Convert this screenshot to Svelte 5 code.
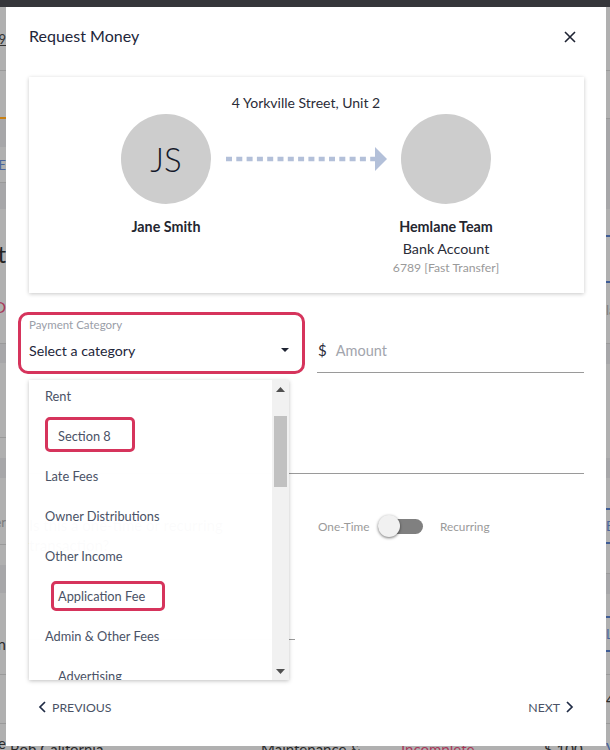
<script lang="ts">
  // strips of the page behind the dialog, top to bottom
  const leftStrip = [
    { h: 64, cls: 'line', text: '19', kind: 'link' },
    { h: 48, cls: 'tab' },
    { h: 28, cls: 'band' },
    { h: 36, cls: 'line', text: 'VIE', kind: 'blue' },
    { h: 26, cls: 'band' },
    { h: 88, text: 'Select', kind: 'big' },
    { h: 18, text: 'O', kind: 'red' },
    { h: 29, cls: 'line' },
    { h: 19, cls: 'band' },
    { h: 75, cls: 'line' },
    { h: 20 },
    { h: 20, cls: 'band' },
    { h: 21 },
    { h: 46, cls: 'line', text: 'Other', kind: 'grey' },
    { h: 20 },
    { h: 28, cls: 'band' },
    { h: 20 },
    { h: 62, cls: 'line', text: 'Main', kind: 'dark' },
    { h: 49, cls: 'line' },
    { h: 26, text: 'e', kind: 'tail' }
  ];

  const rightStrip = [
    { h: 64, cls: 'line' },
    { h: 48, cls: 'line' },
    { h: 90, cls: 'band' },
    { h: 26 },
    { h: 48, cls: 'btn' },
    { h: 12 },
    { h: 30, text: 'la', kind: 'grey' },
    { h: 19, cls: 'line' },
    { h: 20, cls: 'band' },
    { h: 94 },
    { h: 20, cls: 'band' },
    { h: 30 },
    { h: 36, cls: 'btn', text: 'E', kind: 'blue' },
    { h: 30, cls: 'line' },
    { h: 20, cls: 'band' },
    { h: 22 },
    { h: 36, cls: 'btn', text: 'L', kind: 'blue' },
    { h: 23, cls: 'line' },
    { h: 49, cls: 'line', text: '4', kind: 'dark' },
    { h: 26, text: 'V', kind: 'tailblue' }
  ];

  const categories = [
    { label: 'Rent' },
    { label: 'Section 8', sub: true, mark: 'wide' },
    { label: 'Late Fees' },
    { label: 'Owner Distributions' },
    { label: 'Other Income' },
    { label: 'Application Fee', sub: true, mark: 'slim' },
    { label: 'Admin & Other Fees' },
    { label: 'Advertising', sub: true }
  ];
</script>

<div class="page">
  <div class="topbar"></div>
  <div class="stage">
    <div class="strip strip--left">
      {#each leftStrip as seg}
        <div class="seg {seg.cls ?? ''}" style="height: {seg.h}px">
          {#if seg.text}<span class="bit bit--{seg.kind}">{seg.text}</span>{/if}
        </div>
      {/each}
    </div>

    <div class="center">
      <div class="modal">
        <header class="modal__head">
          <h2>Request Money</h2>
          <svg class="close" width="12" height="12" viewBox="0 0 12 12" aria-hidden="true">
            <path d="M1 1l10 10M11 1L1 11" stroke="#1f2433" stroke-width="1.6" fill="none" />
          </svg>
        </header>

        <section class="card">
          <p class="address">4 Yorkville Street, Unit 2</p>
          <div class="flow">
            <div class="person">
              <div class="avatar">JS</div>
              <strong>Jane Smith</strong>
            </div>
            <svg class="arrow" width="161" height="24" viewBox="0 0 161 24" aria-hidden="true">
              <line x1="0" y1="12" x2="150" y2="12" stroke="#b3c0d9" stroke-width="4.5" stroke-dasharray="6 4.3" />
              <path d="M149 0l12 12-12 12z" fill="#b3c0d9" />
            </svg>
            <div class="person">
              <div class="avatar"></div>
              <strong>Hemlane Team</strong>
              <span class="account">Bank Account</span>
              <span class="digits">6789 [Fast Transfer]</span>
            </div>
          </div>
        </section>

        <div class="form">
          <div class="row">
            <div class="select">
              <span class="select__label">Payment Category</span>
              <span class="select__value">Select a category</span>
              <svg class="select__caret" width="8" height="4" viewBox="0 0 8 4" aria-hidden="true">
                <path d="M0 0h8L4 4z" fill="#1f2433" />
              </svg>
            </div>
            <div class="amount">
              <span class="amount__sign">$</span>
              <span class="amount__text">Amount</span>
            </div>
          </div>

          <div class="memo"></div>

          <div class="kind">
            <p class="kind__question">Is this a one-time or recurring transaction?</p>
            <div class="kind__toggle">
              <span class="kind__one">One-Time</span>
              <div class="switch"><div class="switch__knob"></div></div>
              <span>Recurring</span>
            </div>
          </div>

          <div class="date"></div>

          <div class="menu">
            <ul class="menu__list">
              {#each categories as item}
                <li class="item" class:item--sub={item.sub && !item.mark}>
                  {#if item.mark}
                    <span class="mark mark--{item.mark}">{item.label}</span>
                  {:else}
                    {item.label}
                  {/if}
                </li>
              {/each}
            </ul>
            <div class="scroll">
              <svg width="9" height="5" viewBox="0 0 9 5" aria-hidden="true"><path d="M0 5h9L4.5 0z" fill="#505050" /></svg>
              <div class="scroll__track"><div class="scroll__thumb"></div></div>
              <svg width="9" height="5" viewBox="0 0 9 5" aria-hidden="true"><path d="M0 0h9L4.5 5z" fill="#505050" /></svg>
            </div>
          </div>
        </div>

        <footer class="modal__foot">
          <span class="nav">
            <svg width="8" height="12" viewBox="0 0 8 12" aria-hidden="true"><path d="M7 1L2 6l5 5" stroke="#1f2b45" stroke-width="1.7" fill="none" /></svg>
            PREVIOUS
          </span>
          <span class="nav">
            NEXT
            <svg width="8" height="12" viewBox="0 0 8 12" aria-hidden="true"><path d="M1 1l5 5-5 5" stroke="#1f2b45" stroke-width="1.7" fill="none" /></svg>
          </span>
        </footer>
      </div>

      <div class="behind">
        <span>Bob California</span>
        <span>Maintenance &amp;</span>
        <span class="behind__red">Incomplete</span>
        <span>$ 100</span>
      </div>
    </div>

    <div class="strip strip--right">
      {#each rightStrip as seg}
        <div class="seg {seg.cls ?? ''}" style="height: {seg.h}px">
          {#if seg.text}<span class="bit bit--{seg.kind}">{seg.text}</span>{/if}
        </div>
      {/each}
    </div>
  </div>
</div>

<style>
  :global(body) {
    background: #b0b0b0;
  }

  .page {
    width: 610px;
    height: 750px;
    overflow: hidden;
    font-family: 'Lato', 'Noto Sans', sans-serif;
    color: #2a2c38;
  }

  .topbar {
    height: 7px;
    background: #35363a;
  }

  .stage {
    display: grid;
    grid-template-columns: 6px 600px 4px;
  }

  /* page behind the dialog */
  .strip {
    display: flex;
    flex-direction: column;
    overflow: hidden;
  }

  .seg {
    box-sizing: border-box;
    display: flex;
    align-items: center;
    flex: none;
    overflow: hidden;
    white-space: nowrap;
  }

  .strip--left .seg { justify-content: flex-end; }

  .line { border-bottom: 1px solid #9a9a9a; }
  .band { background: #a7a7a9; }
  .tab { border-bottom: 2px solid #c77f14; }
  .btn {
    border-top: 2px solid #3f5c94;
    border-bottom: 2px solid #3f5c94;
  }

  .bit { font-size: 13px; }
  .bit--link { color: #333; text-decoration: underline; }
  .bit--blue { color: #4a659c; }
  .bit--big { color: #222; font-size: 24px; }
  .bit--red { color: #a8395a; font-size: 16px; }
  .bit--grey { color: #7c7c7c; }
  .bit--dark { color: #2a2a2a; font-size: 15px; }
  .bit--tail { color: #2a2a2a; font-size: 15px; margin-top: 12px; }
  .bit--tailblue { color: #4a659c; font-size: 15px; margin-top: 22px; }

  .center {
    height: 743px;
    overflow: hidden;
  }

  .behind {
    display: grid;
    grid-template-columns: 255px 140px 143px 1fr;
    height: 14px;
    margin-top: -4px;
    font-size: 15px;
    line-height: 14px;
    color: #2a2a2a;
  }

  .behind span:first-child { padding-left: 4px; }
  .behind__red { color: #a8395a; }

  /* dialog */
  .modal {
    box-sizing: border-box;
    position: relative;
    z-index: 1;
    display: flex;
    flex-direction: column;
    height: 739px;
    background: #fff;
    padding: 0 22px 0 23px;
  }

  .modal__head {
    display: flex;
    align-items: center;
    justify-content: space-between;
    flex: none;
    height: 57px;
    margin-bottom: 13px;
    padding-right: 8px;
  }

  .modal__head h2 {
    margin: 0;
    font-size: 16px;
    font-weight: 400;
    color: #22263a;
  }

  .close { margin-top: 3px; }

  .card {
    box-sizing: border-box;
    flex: none;
    height: 216px;
    padding: 16px 93px 0 92px;
    background: #fff;
    box-shadow: 0 1px 4px rgba(0, 0, 0, 0.22);
  }

  .address {
    margin: 0 0 1px;
    line-height: 20px;
    font-size: 14px;
    text-align: center;
    color: #2a2c38;
  }

  .flow {
    display: grid;
    grid-template-columns: 90px 1fr 90px;
    column-gap: 14px;
  }

  .person {
    display: flex;
    flex-direction: column;
    align-items: center;
    white-space: nowrap;
  }

  .person strong {
    margin-top: 13px;
    font-size: 14.3px;
    line-height: 20px;
    font-weight: 700;
    color: #24262f;
  }

  .avatar {
    display: flex;
    align-items: center;
    justify-content: center;
    flex: none;
    width: 90px;
    height: 90px;
    border-radius: 50%;
    background: #cdcdcd;
    font-size: 33px;
    font-weight: 300;
    color: #15192a;
  }

  .arrow {
    margin: 33px 0 0 1px;
  }

  .account {
    margin-top: 2px;
    font-size: 14.3px;
    line-height: 20px;
  }

  .digits {
    font-size: 12.2px;
    line-height: 18px;
    color: #9a9a9a;
  }

  /* form */
  .form {
    position: relative;
    flex: none;
    margin-top: 19px;
  }

  .row {
    display: grid;
    grid-template-columns: 276px 267px;
    column-gap: 12px;
    height: 62px;
  }

  .select {
    box-sizing: border-box;
    position: relative;
    display: flex;
    flex-direction: column;
    width: 287px;
    height: 62px;
    margin-left: -11px;
    padding: 2px 0 0 8px;
    border: 3px solid #d6345c;
    border-radius: 10px;
  }

  .select__label {
    font-size: 11.5px;
    line-height: 16px;
    color: #9a9ea8;
  }

  .select__value {
    margin-top: 8px;
    font-size: 14.2px;
    line-height: 20px;
    color: #22263a;
  }

  .select__caret {
    position: absolute;
    right: 13px;
    top: 33px;
  }

  .amount {
    box-sizing: border-box;
    display: flex;
    align-items: center;
    gap: 9px;
    height: 61px;
    padding: 16px 0 0 1px;
    border-bottom: 1px solid #9a9a9a;
  }

  .amount__sign { font-size: 15px; color: #2a2c38; }
  .amount__text { font-size: 14.5px; color: #a2a5ad; }

  .memo {
    height: 99px;
    border-bottom: 1px solid #9a9a9a;
  }

  .kind {
    display: grid;
    grid-template-columns: 200px 1fr;
    column-gap: 89px;
    height: 100px;
    padding-top: 32px;
  }

  .kind__question {
    margin: 9px 0 0;
    font-size: 15px;
    line-height: 20px;
  }

  .kind__toggle {
    display: flex;
    align-items: center;
    gap: 11px;
    height: 40px;
    font-size: 11.8px;
    color: #9a9a9a;
  }

  .kind__one {
    flex: none;
    width: 49px;
    white-space: nowrap;
  }

  .switch {
    position: relative;
    width: 45px;
    height: 15px;
    margin-right: 6px;
    border-radius: 8px;
    background: #808080;
  }

  .switch__knob {
    position: absolute;
    left: 0;
    top: -4px;
    width: 22px;
    height: 22px;
    border-radius: 50%;
    background: #f1f1f1;
    box-shadow: 0 1px 3px rgba(0, 0, 0, 0.55);
  }

  .date {
    width: 266px;
    height: 33px;
    border-bottom: 1px solid #9a9a9a;
  }

  .menu {
    position: absolute;
    left: 0;
    top: 68px;
    display: flex;
    width: 260px;
    height: 300px;
    background: rgba(255, 255, 255, 0.985);
    box-shadow: 0 1px 4px rgba(0, 0, 0, 0.25);
    overflow: hidden;
  }

  .menu__list {
    flex: 1;
    margin: -4px 0 0;
    padding: 0;
    list-style: none;
  }

  .item {
    display: flex;
    align-items: center;
    height: 40px;
    padding-left: 16px;
    font-size: 12.8px;
    color: #4a5266;
  }

  .item--sub { padding-left: 29px; }

  .mark {
    box-sizing: border-box;
    border: 3px solid #d6345c;
    border-radius: 5px;
    padding-left: 10px;
  }

  .mark--wide {
    width: 90px;
    height: 35px;
    margin-bottom: 3px;
    padding-top: 8px;
  }

  .mark--slim {
    width: 114px;
    height: 30px;
    margin-left: 6px;
    padding-left: 4px;
    padding-top: 4px;
  }

  .scroll {
    display: flex;
    flex-direction: column;
    align-items: center;
    flex: none;
    justify-content: space-between;
    width: 17px;
    padding: 7px 0 6px;
    box-sizing: border-box;
    background: #f1f1f1;
  }

  .scroll__track {
    flex: 1;
    width: 13px;
    padding-top: 24px;
  }

  .scroll__thumb {
    height: 71px;
    background: #c1c1c1;
  }

  .modal__foot {
    display: flex;
    align-items: center;
    justify-content: space-between;
    flex: none;
    height: 40px;
    margin-top: auto;
    margin-bottom: 19px;
    padding: 0 10px 0 9px;
  }

  .nav {
    display: inline-flex;
    align-items: center;
    gap: 6px;
    font-size: 12.3px;
    color: #4a5266;
  }
</style>
